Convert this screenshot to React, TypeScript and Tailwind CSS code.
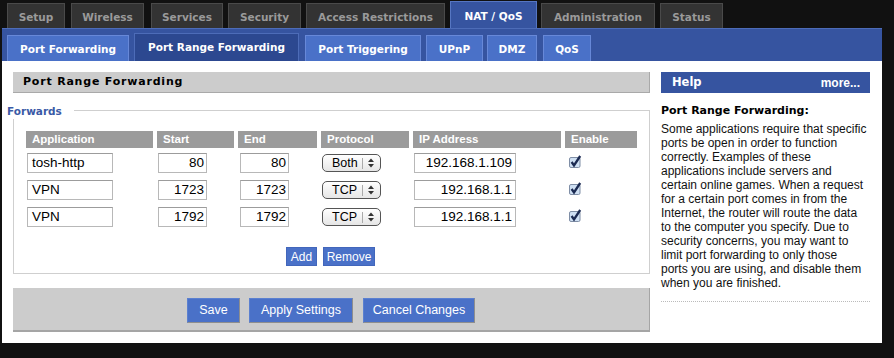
import React from "react";

const verdana = "font-['DejaVu_Sans',Verdana,sans-serif]";
const arial = "font-['Liberation_Sans',Arial,sans-serif]";

const topTabs = [
  { label: "Setup", cls: "ml-[7px] w-[58px]" },
  { label: "Wireless", cls: "ml-[6px] w-[73px]" },
  { label: "Services", cls: "ml-[7px] w-[72px]" },
  { label: "Security", cls: "ml-[5px] w-[73px]" },
  { label: "Access Restrictions", cls: "ml-[5px] w-[139px]" },
  { label: "NAT / QoS", cls: "ml-[5px] w-[87px]", active: true },
  { label: "Administration", cls: "ml-[4px] w-[114px]" },
  { label: "Status", cls: "ml-[5px] w-[63px]" },
];

const subTabs = [
  { label: "Port Forwarding", cls: "ml-[5px] w-[122px]" },
  { label: "Port Range Forwarding", cls: "ml-[5px] w-[165px]", active: true },
  { label: "Port Triggering", cls: "ml-[6px] w-[116px]" },
  { label: "UPnP", cls: "ml-[5px] w-[57px]" },
  { label: "DMZ", cls: "ml-[4px] w-[50px]" },
  { label: "QoS", cls: "ml-[6px] w-[48px]" },
];

const forwards = [
  { app: "tosh-http", start: "80", end: "80", proto: "Both", ip: "192.168.1.109" },
  { app: "VPN", start: "1723", end: "1723", proto: "TCP", ip: "192.168.1.1" },
  { app: "VPN", start: "1792", end: "1792", proto: "TCP", ip: "192.168.1.1" },
];

const helpLines = [
  "Some applications require that specific",
  "ports be open in order to function",
  "correctly. Examples of these",
  "applications include servers and",
  "certain online games. When a request",
  "for a certain port comes in from the",
  "Internet, the router will route the data",
  "to the computer you specify. Due to",
  "security concerns, you may want to",
  "limit port forwarding to only those",
  "ports you are using, and disable them",
  "when you are finished.",
];

const grid = "grid grid-cols-[127px_77px_79px_88px_148px_72px] gap-x-[4px]";

function Field({ value, className }: { value: string; className: string }) {
  return (
    <div
      className={`h-[20px] border border-[#b8b8b8] border-t-[#9c9c9c] bg-white px-[4px] text-[13.5px] leading-[18px] text-black ${arial} ${className}`}
    >
      {value}
    </div>
  );
}

function Select({ value }: { value: string }) {
  return (
    <div className="ml-[1px] flex h-[18px] w-[59px] items-center rounded-[5px] border border-[#555] bg-gradient-to-b from-white to-[#e6e6e6]">
      <span className={`w-[39px] pl-[9px] text-[12.5px] leading-none text-black ${arial}`}>{value}</span>
      <span className="h-[11px] w-px bg-[#aaa]" />
      <svg width="6" height="10" viewBox="0 0 6 10" className="ml-[5px]">
        <path d="M0 4 L3 0.5 L6 4Z" fill="#333" />
        <path d="M0 6 L3 9.5 L6 6Z" fill="#333" />
      </svg>
    </div>
  );
}

function Check() {
  return (
    <svg width="13" height="13" viewBox="0 0 13 13" className="ml-[4px] -mt-[3px]">
      <rect x="0.5" y="2.5" width="10.5" height="10" rx="1.5" fill="#cfe0f3" stroke="#7f8ea6" />
      <path d="M2.6 7 L5 10.4 L11.2 1" fill="none" stroke="#1b2a52" strokeWidth="2.3" />
    </svg>
  );
}

export default function App() {
  return (
    <div className="h-[358px] w-[894px] overflow-hidden bg-[#111]">
      {/* top level tabs */}
      <div className={`flex h-[28px] items-end ${verdana}`}>
        {topTabs.map((t) => (
          <div
            key={t.label}
            className={
              t.active
                ? `${t.cls} flex h-[27px] items-center justify-center border-x border-t border-[#5676c2] bg-[#3654a0] pt-[4px] text-[10.5px] font-bold text-white`
                : `${t.cls} flex h-[25px] items-center justify-center border-x border-t border-[#4a4a4a] bg-[#333] pt-[3px] text-[10.5px] font-bold text-[#9a9a9a]`
            }
          >
            {t.label}
          </div>
        ))}
      </div>

      {/* sub tabs */}
      <div className={`ml-[2px] flex h-[33px] w-[880px] items-end border-t border-[#4d6cb8] bg-[#3654a0] ${verdana}`}>
        {subTabs.map((t) => (
          <div
            key={t.label}
            className={
              t.active
                ? `${t.cls} flex h-[28px] items-center justify-center border-x border-t border-[#4d6cb8] bg-[#2c4890] pt-[1px] text-[10.5px] font-bold text-white`
                : `${t.cls} flex h-[26px] items-center justify-center border-x border-t border-[#6788d8] bg-[#4a71c8] pt-[3px] text-[10.5px] font-bold text-white`
            }
          >
            {t.label}
          </div>
        ))}
      </div>

      {/* content */}
      <div className="ml-[2px] flex h-[282px] w-[880px] bg-white pl-[11px] pt-[11px]">
        <div className="w-[637px]">
          <div
            className={`flex h-[21px] items-center border-b border-r border-[#a9a9a9] bg-[#cccccc] pl-[10px] text-[11px] font-bold tracking-[0.8px] text-black ${verdana}`}
          >
            Port Range Forwarding
          </div>

          <div className="relative mt-[17px] border border-[#cfcfcf] pb-[7px] pl-[12px] pt-[20px]">
            <div
              className={`absolute -left-[7px] -top-[7px] h-[15px] w-[67px] bg-white text-[10.5px] font-bold leading-[14px] text-[#3a5aa6] ${verdana}`}
            >
              Forwards
            </div>

            <div className={`${grid} h-[17px] text-[11.5px] font-bold text-white ${arial}`}>
              {["Application", "Start", "End", "Protocol", "IP Address", "Enable"].map((h) => (
                <div key={h} className="flex items-center bg-[#9b9b9b] pl-[6px] leading-none">
                  {h}
                </div>
              ))}
            </div>

            <div className="mt-[5px] flex flex-col gap-y-[7px]">
              {forwards.map((r, i) => (
                <div key={i} className={`${grid} h-[20px] items-center`}>
                  <Field value={r.app} className="ml-[1px] w-[86px]" />
                  <Field value={r.start} className="ml-[1px] w-[49px] pr-[2px] text-right" />
                  <Field value={r.end} className="ml-[2px] w-[49px] pr-[2px] text-right" />
                  <Select value={r.proto} />
                  <Field value={r.ip} className="ml-[1px] w-[102px] pr-[3px] text-right" />
                  <Check />
                </div>
              ))}
            </div>

            <div className={`mt-[20px] flex justify-center gap-[6px] pr-[14px] text-[12px] text-white ${arial}`}>
              <button className="h-[19px] w-[31px] border border-[#4266bb] bg-[#4a71c8] leading-none">Add</button>
              <button className="h-[19px] w-[52px] border border-[#4266bb] bg-[#4a71c8] leading-none">Remove</button>
            </div>
          </div>

          <div
            className={`mt-[14px] flex h-[44px] items-start justify-center gap-[9px] border-b-2 border-r border-[#a5a5a5] bg-[#cccccc] pt-[10px] text-[12.5px] text-white ${arial}`}
          >
            <button className="h-[25px] w-[53px] border border-[#5b80d0] border-b-[#8e8e8e] border-r-[#8e8e8e] bg-[#4a71c8] leading-none">
              Save
            </button>
            <button className="h-[25px] w-[104px] border border-[#5b80d0] border-b-[#8e8e8e] border-r-[#8e8e8e] bg-[#4a71c8] leading-none">
              Apply Settings
            </button>
            <button className="ml-[1px] h-[25px] w-[112px] border border-[#5b80d0] border-b-[#8e8e8e] border-r-[#8e8e8e] bg-[#4a71c8] leading-none">
              Cancel Changes
            </button>
          </div>
        </div>

        {/* help */}
        <div className="ml-[11px] w-[209px]">
          <div className="flex h-[21px] items-center justify-between bg-[#3654a0] pl-[11px] pr-[10px] text-white">
            <span className={`text-[11.5px] font-bold ${verdana}`}>Help</span>
            <span className={`text-[12px] font-bold ${arial}`}>more...</span>
          </div>
          <div className={`mt-[11px] text-[11px] font-bold leading-[14px] text-black ${verdana}`}>
            Port Range Forwarding:
          </div>
          <div className={`mt-[4px] whitespace-nowrap text-[12px] leading-[14px] text-[#111] ${arial}`}>
            {helpLines.map((l) => (
              <div key={l}>{l}</div>
            ))}
          </div>
          <div className="mt-[11px] border-t border-dotted border-[#bbb]" />
        </div>
      </div>
    </div>
  );
}
